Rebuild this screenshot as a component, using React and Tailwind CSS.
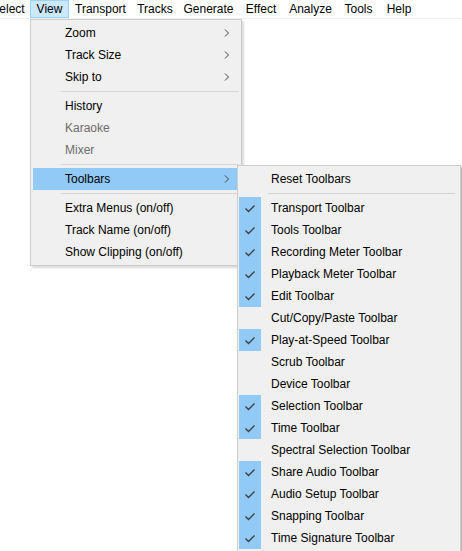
import React from "react";

const Check = () => (
  <svg width="22" height="22" viewBox="0 0 22 22" className="block">
    <path d="M6.5 11.5 L9.5 14.5 L15.5 8.5" fill="none" stroke="#3c3c3c" strokeWidth="1.3" />
  </svg>
);

const Arrow = () => (
  <svg width="8" height="10" viewBox="0 0 8 10" className="block">
    <path d="M2 1.5 L5.5 5 L2 8.5" fill="none" stroke="#444" strokeWidth="1" />
  </svg>
);

const barItems = [
  { t: "Select", w: "w-[44px] -ml-[14px]" },
  { t: "View", w: "w-[39px]", hi: true },
  { t: "Transport", w: "w-[63px]" },
  { t: "Tracks", w: "w-[46px]" },
  { t: "Generate", w: "w-[61px]" },
  { t: "Effect", w: "w-[44px]" },
  { t: "Analyze", w: "w-[55px]" },
  { t: "Tools", w: "w-[41px]" },
  { t: "Help", w: "w-[40px]" },
];

const mainItems = [
  { t: "Zoom", arrow: true },
  { t: "Track Size", arrow: true },
  { t: "Skip to", arrow: true },
  { sep: true },
  { t: "History" },
  { t: "Karaoke", dis: true },
  { t: "Mixer", dis: true },
  { sep: true },
  { t: "Toolbars", arrow: true, hi: true },
  { sep: true },
  { t: "Extra Menus (on/off)" },
  { t: "Track Name (on/off)" },
  { t: "Show Clipping (on/off)" },
];

const subItems = [
  { t: "Reset Toolbars" },
  { sep: true },
  { t: "Transport Toolbar", c: true },
  { t: "Tools Toolbar", c: true },
  { t: "Recording Meter Toolbar", c: true },
  { t: "Playback Meter Toolbar", c: true },
  { t: "Edit Toolbar", c: true },
  { t: "Cut/Copy/Paste Toolbar" },
  { t: "Play-at-Speed Toolbar", c: true },
  { t: "Scrub Toolbar" },
  { t: "Device Toolbar" },
  { t: "Selection Toolbar", c: true },
  { t: "Time Toolbar", c: true },
  { t: "Spectral Selection Toolbar" },
  { t: "Share Audio Toolbar", c: true },
  { t: "Audio Setup Toolbar", c: true },
  { t: "Snapping Toolbar", c: true },
  { t: "Time Signature Toolbar", c: true },
];

export default function App() {
  return (
    <div className="relative w-[462px] h-[551px] bg-white overflow-hidden font-['Liberation_Sans',Arial,sans-serif] text-[12px] text-black">
      <div className="flex h-[19px] items-stretch border-b border-[#f0f0f0]">
        {barItems.map((b) => (
          <div
            key={b.t}
            className={
              "shrink-0 flex items-center justify-center whitespace-nowrap " +
              b.w +
              (b.hi ? " bg-[#cce8ff] border border-[#99d1ff]" : "")
            }
          >
            {b.t}
          </div>
        ))}
      </div>

      <div className="absolute left-[30px] top-[19px] w-[212px] bg-[#f0f0f0] border border-[#cccccc] p-[2px] shadow-[2px_2px_2px_rgba(0,0,0,0.15)]">
        {mainItems.map((m, i) =>
          m.sep ? (
            <div key={i} className="h-[7px] flex items-center pl-[28px]">
              <div className="h-px w-full bg-[#d5d5d5]" />
            </div>
          ) : (
            <div
              key={i}
              className={
                "h-[22px] flex items-center pl-[32px] pr-[8px] " +
                (m.hi ? "bg-[#91c9f7] " : "") +
                (m.dis ? "text-[#6d6d6d]" : "")
              }
            >
              <span className="flex-1">{m.t}</span>
              {m.arrow && <Arrow />}
            </div>
          )
        )}
      </div>

      <div className="absolute left-[237px] top-[165px] w-[224px] h-[400px] bg-[#f0f0f0] border border-[#cccccc] pt-[2px] pl-[1px] pr-[2px] shadow-[2px_2px_2px_rgba(0,0,0,0.3)]">
        {subItems.map((s, i) =>
          s.sep ? (
            <div key={i} className="h-[7px] flex items-center pl-[29px] pr-[3px]">
              <div className="h-px w-full bg-[#d5d5d5]" />
            </div>
          ) : (
            <div key={i} className="h-[22px] flex items-center">
              <div className={"w-[22px] h-[22px] " + (s.c ? "bg-[#91c9f7]" : "")}>
                {s.c && <Check />}
              </div>
              <span className="pl-[10px]">{s.t}</span>
            </div>
          )
        )}
      </div>
    </div>
  );
}
